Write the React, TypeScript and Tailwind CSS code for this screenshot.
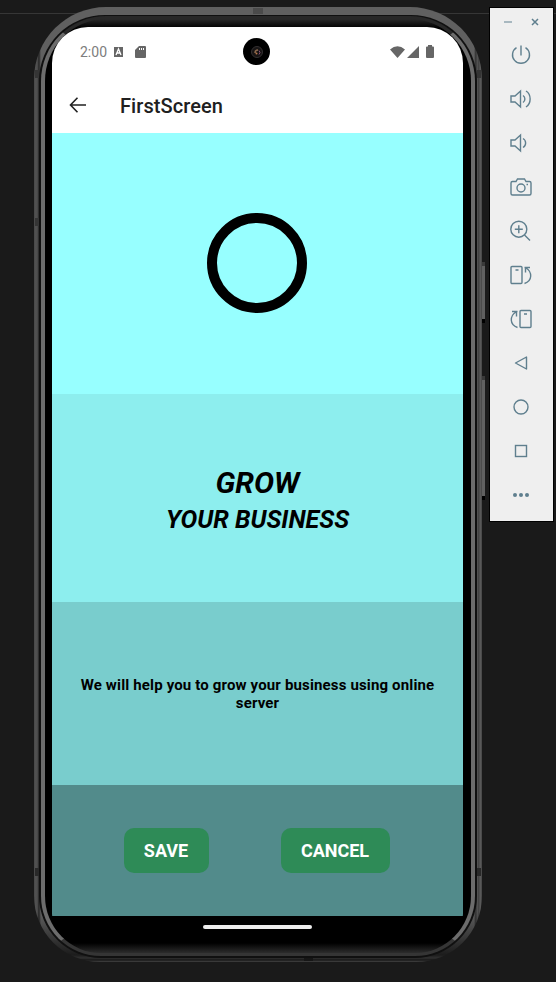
import React from "react";

function Frame() {
  return (
    <>
      <div className="absolute left-[34px] top-[7px] h-[955px] w-[448px] rounded-[72px_72px_66px_66px] bg-[linear-gradient(to_top,#444_0,#181818_2px,#303030_4px,#1c1c1c_7px,transparent_50px),linear-gradient(to_right,#383838_0,#5c5c5c_1px,#454545_2px,#5a5a5a_3px,#383838_4px,#282828_5px,#606060_7px,#606060_440px,#2b2b2b_442px,#585858_443px,#3c3c3c_445px,#606060_446px,#444_448px)] px-[5px] pb-[4px] pt-[8px]">
        <div className="h-full w-full rounded-[66px_66px_62px_62px] bg-[#101010] px-[2px] pb-[2px] pt-px">
          <div className="h-full w-full rounded-[65px_65px_60px_60px] border-x-4 border-b-[3px] border-t-[3px] border-x-[#6c6c6c] border-b-[#353535] border-t-[#282828] bg-[linear-gradient(to_bottom,#292929,#000_9px,#000_924px,#353535_936px)]" />
        </div>
      </div>
      <div className="absolute left-[35px] top-[70px] h-2 w-1 bg-[#353535]" />
      <div className="absolute left-[477px] top-[70px] h-2 w-1 bg-[#353535]" />
      <div className="absolute left-[35px] top-[218px] h-2 w-1 bg-[#353535]" />
      <div className="absolute left-[35px] top-[868px] h-2 w-1 bg-[#292929]" />
      <div className="absolute left-[477px] top-[868px] h-2 w-1 bg-[#292929]" />
      <div className="absolute left-[253px] top-[8px] h-[6px] w-[10px] bg-[#4b4b4b]" />
      <div className="absolute left-[304px] top-[958px] h-[3px] w-[9px] bg-[#161616]" />
    </>
  );
}

function ToolIcon({ children }: { children: React.ReactNode }) {
  return (
    <button className="flex h-11 w-full items-center justify-center">
      <svg width="24" height="24" viewBox="0 0 24 24" fill="none" stroke="#5f7f8e" strokeWidth="1.4">
        {children}
      </svg>
    </button>
  );
}

function Toolbar() {
  return (
    <aside className="absolute left-[489px] top-[7px] h-[515px] w-[65px] border border-black bg-[#efefef]">
      <div className="flex h-[25px] items-center justify-center gap-[19px] pt-[3px]">
        <svg width="8" height="8" viewBox="0 0 8 8" stroke="#91a6b0" strokeWidth="1.5"><path d="M0 4h8" /></svg>
        <svg width="8" height="8" viewBox="0 0 8 8" stroke="#5f7f8e" strokeWidth="1.5"><path d="m1 1 6 6M7 1 1 7" /></svg>
      </div>
      <div className="flex flex-col pr-[2px]">
        <ToolIcon><path d="M12 2.500v10M7.500 4.600a8.500 8.500 0 1 0 9 0" /></ToolIcon>
        <ToolIcon><path d="M2 9h4l5.500-5v16L6 15H2ZM14 8.500c2.500 1.500 2.500 5.500 0 7M17 4c5.500 3.500 5.500 12.500 0 16" /></ToolIcon>
        <ToolIcon><path d="M2 9h4l5.500-5v16L6 15H2ZM14 7.500c3.500 2 3.500 7 0 9" /></ToolIcon>
        <ToolIcon><path d="M3.500 6.500H7L8.500 4h7L17 6.500h3.500q1.500 0 1.500 1.500v10.500q0 1.500-1.500 1.500h-17Q2 20 2 18.500V8q0-1.500 1.500-1.500Z" /><circle cx="12" cy="13" r="4" /><path d="M17.500 9.500H19" /></ToolIcon>
        <ToolIcon><circle cx="9.800" cy="10.200" r="8" /><path d="m15.500 16 5.500 5.500M9.800 6.200v8M5.800 10.200h8" /></ToolIcon>
        <ToolIcon><rect x="2" y="3.500" width="11" height="17" rx="1" /><path d="M6.500 7h3M15.500 4.500H21M16.500 4v5.500M17 5c6.500 4 6.500 13-1.500 15.500" /></ToolIcon>
        <ToolIcon><rect x="11" y="3.500" width="11" height="17" rx="1" /><path d="M15 7h3M3 4.500h5.500M7.500 4v5.500M7 5c-6.500 4-6.500 13 1.500 15.500" /></ToolIcon>
        <ToolIcon><path d="m6.500 12 11-6v12Z" strokeLinejoin="round" /></ToolIcon>
        <ToolIcon><circle cx="12" cy="12" r="7" /></ToolIcon>
        <ToolIcon><rect x="6.500" y="6.500" width="11" height="11" /></ToolIcon>
        <ToolIcon><g fill="#5f7f8e" stroke="none"><circle cx="6" cy="12" r="2" /><circle cx="12" cy="12" r="2" /><circle cx="18" cy="12" r="2" /></g></ToolIcon>
      </div>
    </aside>
  );
}

export default function App() {
  return (
    <main className="relative h-[982px] w-[556px] overflow-hidden bg-[#1a1a1a] font-['Roboto',sans-serif]">
      <div className="absolute left-0 top-[13px] h-px w-full bg-[#363636]" />
      <div className="absolute left-[481px] top-[262px] h-[61px] w-1 border-y-4 border-t-[#3a3a3a] border-b-black bg-[#606060]" />
      <div className="absolute left-[481px] top-[376px] h-[124px] w-1 border-y-4 border-t-[#3a3a3a] border-b-black bg-[#606060]" />
      <Frame />
      <div className="absolute left-[52px] top-[27px] flex h-[915px] w-[411px] flex-col overflow-hidden rounded-[36px_36px_28px_28px] bg-black">
        <header className="h-[106px] shrink-0 bg-white">
          <div className="flex h-[50px] items-center justify-between px-7 text-[#666666]">
            <div className="flex items-center">
              <span className="w-[27px] text-[14px] text-[#7d7d7d]">2:00</span>
              <svg className="ml-[7px]" width="9" height="10" viewBox="0 0 9 10"><rect width="9" height="10" fill="#666" /><path d="m2 8 2.500-6L7 8M3 6h3" stroke="white" fill="none" strokeWidth="1.300" /></svg>
              <svg className="ml-3" width="11" height="13" viewBox="0 0 11 13" fill="#666"><path d="M4 0h6q1 0 1 1v10q0 1-1 1H1q-1 0-1-1V4Z" /><path d="M4.500 2v2M6.500 2v2M8.500 2v2" stroke="white" /></svg>
            </div>
            <svg width="45" height="14" viewBox="0 0 45 14" fill="#666"><path d="M0 4.500Q7.500-2 15 4.500L7.500 13ZM17 13 29 1v12ZM36 2.500q0-1 1-1h1V0h4v1.500h1q1 0 1 1V12q0 1-1 1h-6q-1 0-1-1Z" /></svg>
          </div>
          <div className="flex h-14 items-center pl-[17px]">
            <svg width="18" height="18" viewBox="0 0 18 18" fill="none" stroke="#222" strokeWidth="1.600"><path d="M17 9H1.500M8.500 1.800 1.500 9l7 7.200" /></svg>
            <h1 className="ml-[33px] pt-px text-[20px] font-medium tracking-[0.08px] text-[#202020]">FirstScreen</h1>
          </div>
        </header>
        <section className="flex h-[261px] shrink-0 items-center justify-center bg-[#97ffff] pb-px pr-px"><div className="h-[100px] w-[100px] rounded-full border-10 border-black" /></section>
        <section className="flex h-[208px] shrink-0 flex-col items-center justify-center bg-[#8deeee] pt-[5px] font-bold italic text-black">
          <div className="text-[30px] leading-[38px]">GROW</div>
          <div className="text-[25px] leading-9">YOUR BUSINESS</div>
        </section>
        <section className="flex h-[183px] shrink-0 items-center justify-center bg-[#79cdcd] px-5 pt-px text-center text-[15px] font-bold leading-[18px] tracking-[0.15px] text-black">We will help you to grow your business using online server</section>
        <section className="flex h-[130.5px] shrink-0 items-center justify-center gap-[72px] bg-[#528b8b] pr-[2px] text-[18px] font-bold text-white">
          <button className="h-[45px] w-[85px] rounded-[10px] bg-[#2e8b57]">SAVE</button>
          <button className="h-[45px] w-[109px] rounded-[10px] bg-[#2e8b57]">CANCEL</button>
        </section>
        <div className="flex grow items-center justify-center pb-[3px] pr-px"><div className="h-1 w-[109px] rounded-full bg-[#eeeeee]" /></div>
      </div>
      <div className="absolute left-[243px] top-[38px] flex h-[27px] w-[27px] items-center justify-center rounded-full bg-black">
        <svg width="14" height="14" viewBox="0 0 14 14" fill="none">
          <circle cx="7" cy="7" r="5.500" fill="#171414" stroke="#343031" />
          <path d="M5 8q0-3 3-3" stroke="#88684d" strokeWidth="1.600" />
          <path d="M9 5.500q2 2 0 4" stroke="#815078" />
          <circle cx="6.500" cy="8.500" r="1" fill="#b8794c" />
        </svg>
      </div>
      <Toolbar />
    </main>
  );
}
